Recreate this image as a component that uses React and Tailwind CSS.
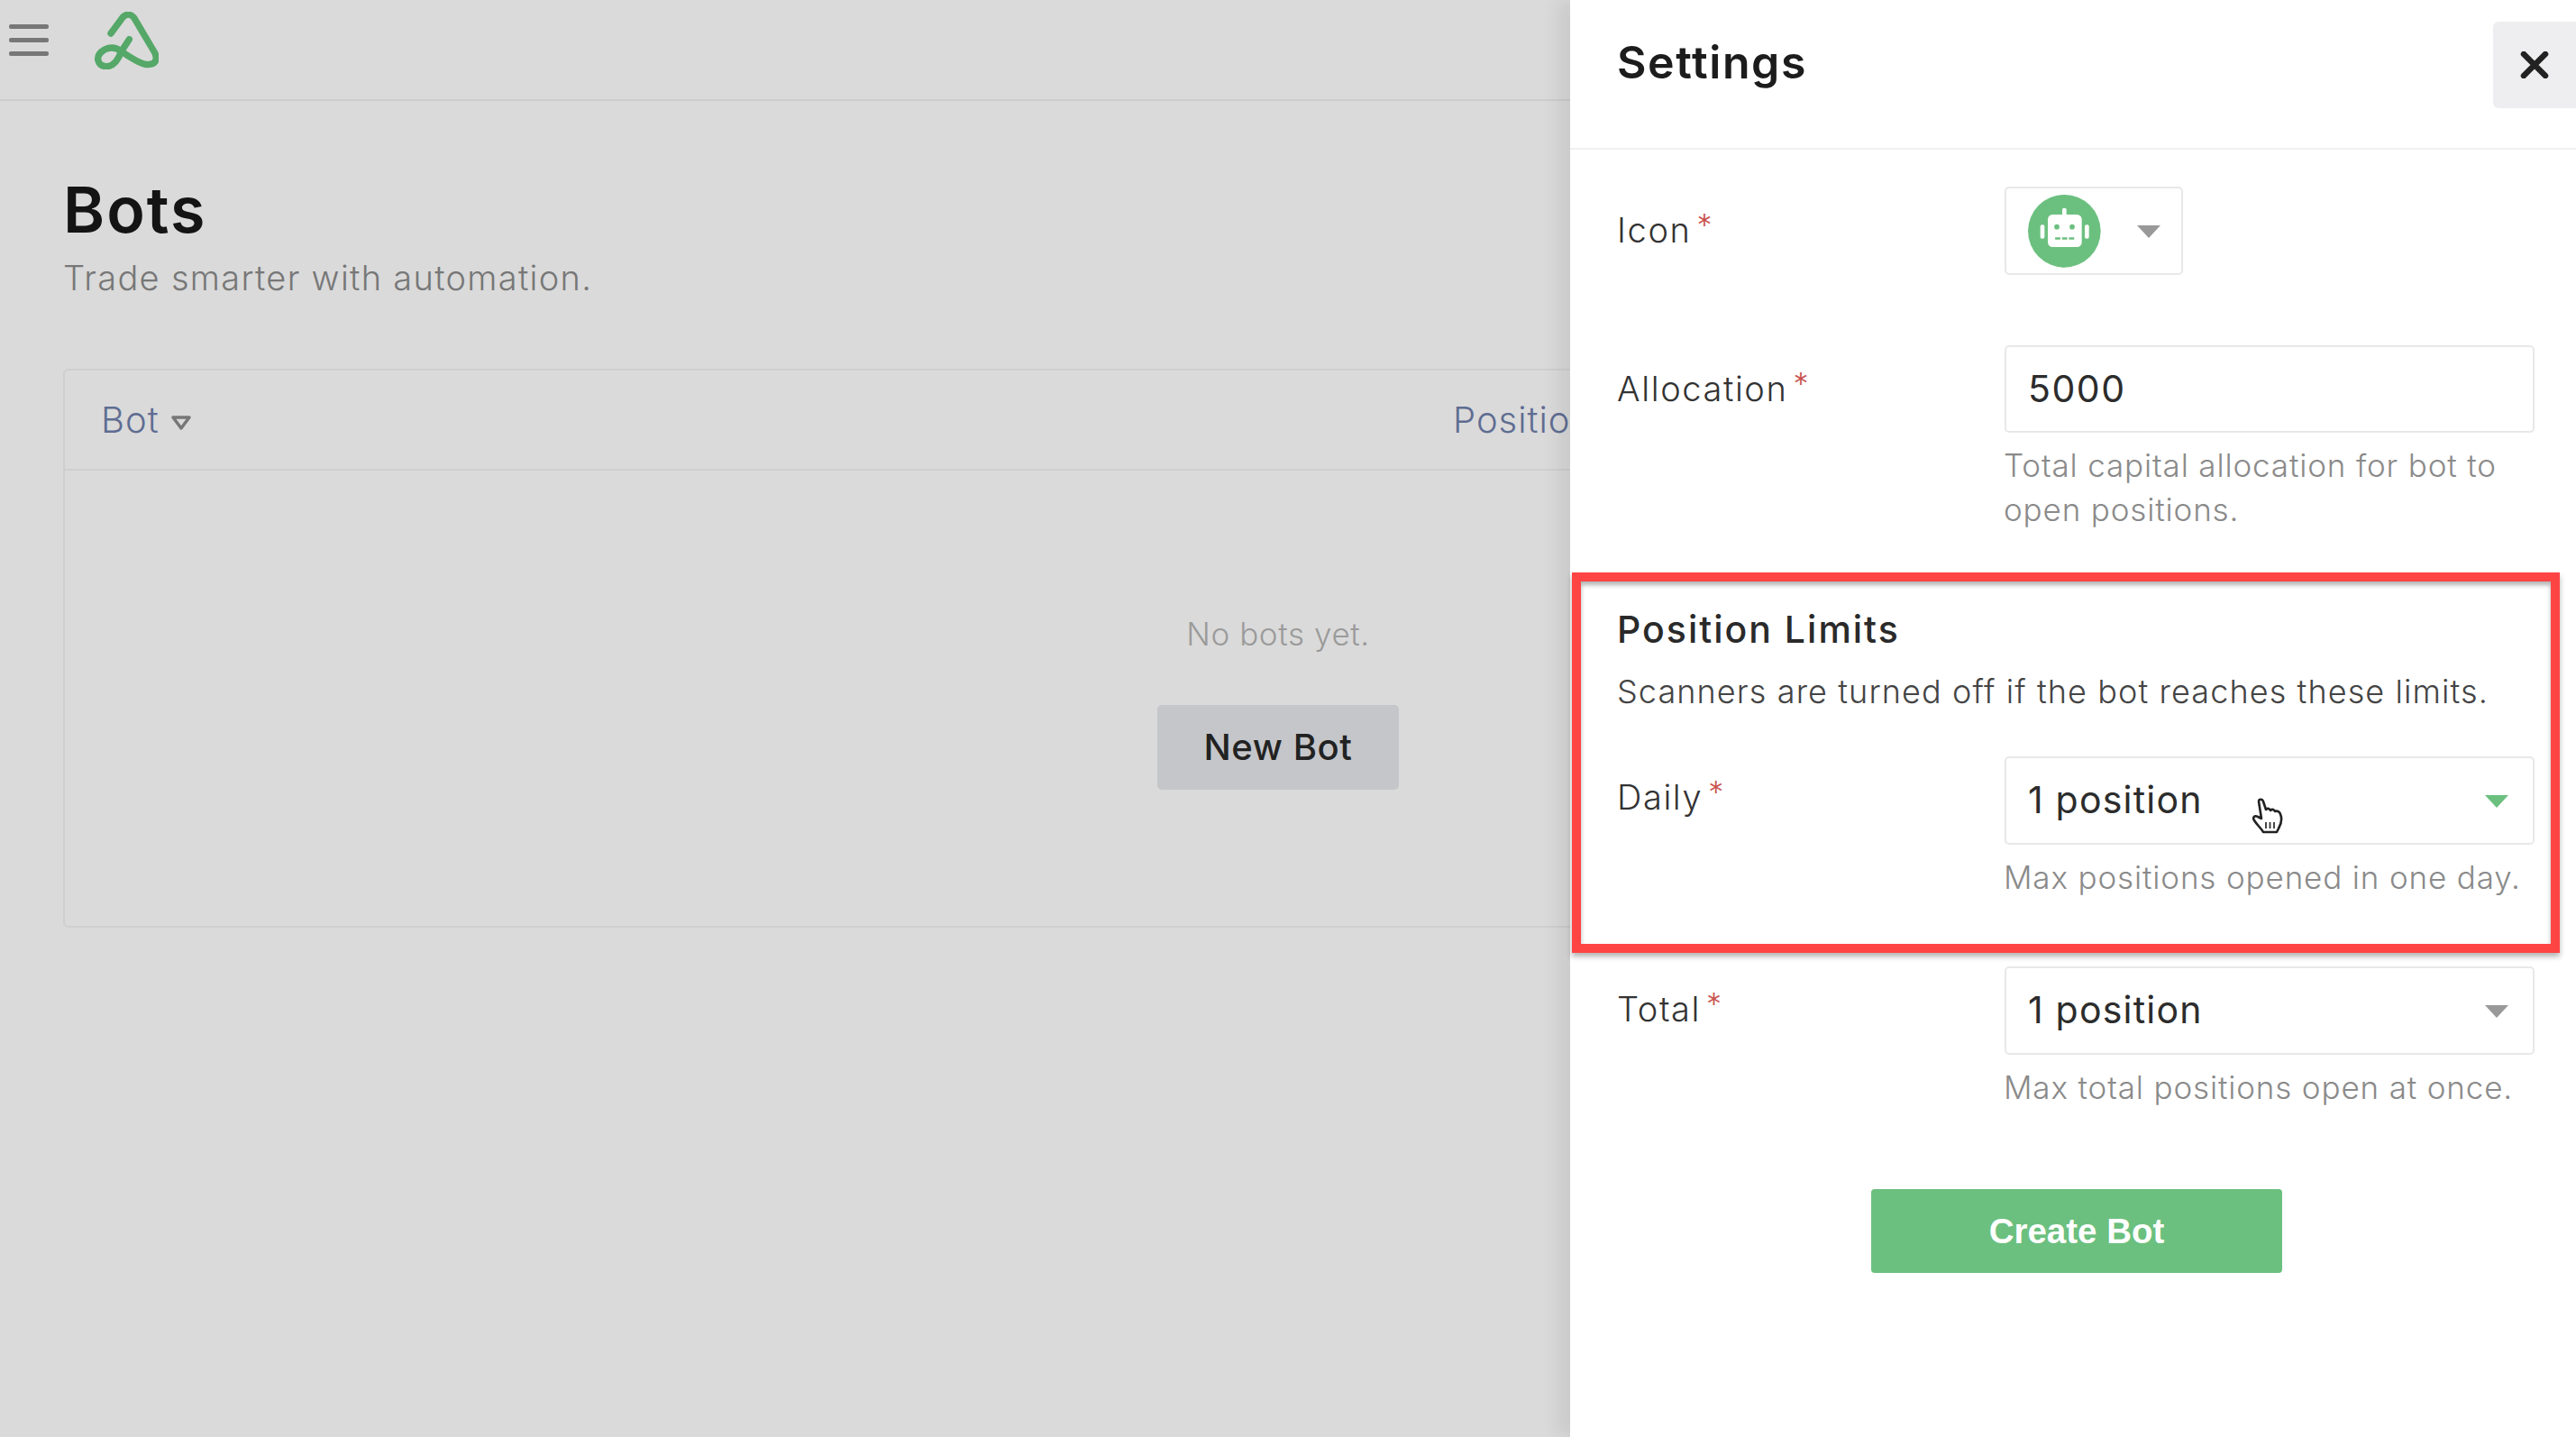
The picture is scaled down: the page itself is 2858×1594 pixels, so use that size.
import React from "react";

const Logo = () => (
  <svg width="72" height="64" viewBox="0 0 216 192" fill="none" className="shrink-0">
    <path
      d="M57 72 L97 18 Q116 0 134 20 L204 138 Q218 176 176 176 Q150 172 92 132 Q66 112 36 126 Q12 140 14 160 Q20 184 48 182 Q76 176 92 132 L118 92"
      stroke="#55a868"
      strokeWidth="22"
      strokeLinecap="round"
      strokeLinejoin="round"
    />
  </svg>
);

const Hamburger = () => (
  <svg width="44" height="36" viewBox="0 0 44 36" className="shrink-0">
    <rect x="0" y="0" width="44" height="5" rx="2" fill="#777" />
    <rect x="0" y="15" width="44" height="5" rx="2" fill="#777" />
    <rect x="0" y="30" width="44" height="5" rx="2" fill="#777" />
  </svg>
);

const Robot = () => (
  <svg width="81" height="81" viewBox="0 0 243 243" className="shrink-0">
    <circle cx="121" cy="121" r="121" fill="#6cc07f" />
    <rect x="114" y="44" width="14" height="30" rx="6" fill="#fff" />
    <rect x="66" y="66" width="113" height="108" rx="16" fill="#fff" />
    <rect x="41" y="100" width="14" height="46" rx="6" fill="#fff" />
    <rect x="189" y="100" width="14" height="46" rx="6" fill="#fff" />
    <circle cx="96" cy="107" r="8.5" fill="#6cc07f" />
    <circle cx="147" cy="107" r="8.5" fill="#6cc07f" />
    <rect x="90" y="142" width="18" height="7" rx="2" fill="#6cc07f" />
    <rect x="113" y="142" width="18" height="7" rx="2" fill="#6cc07f" />
    <rect x="136" y="142" width="18" height="7" rx="2" fill="#6cc07f" />
  </svg>
);

const Caret = ({ color }) => (
  <svg width="26" height="14" viewBox="0 0 26 14" className="mt-[2px] shrink-0">
    <path d="M0 0 H26 L13 14 Z" fill={color} />
  </svg>
);

const HandCursor = () => (
  <svg width="36" height="40" viewBox="0 0 36 40" className="absolute left-[272px] top-[44px]">
    <path
      d="M8 4 C8 1 12 1 13 4 L16 13 C18 11 20 12 21 14 C23 12 25 13 26 15 C28 14 31 15 32 18 C34 23 33 29 30 34 L28 38 L13 38 C11 34 6 30 3 25 C1 22 3 19 7 21 L11 23 Z"
      fill="#fff"
      stroke="#222"
      strokeWidth="2.6"
      strokeLinejoin="round"
    />
    <path d="M16 27 V34 M20.5 27 V34 M25 27 V34" stroke="#333" strokeWidth="1.8" />
  </svg>
);

const Label = ({ text }) => (
  <div className="w-[430px] shrink-0 text-[38px] font-light leading-[44px] tracking-[1.6px] text-[#333]">
    {text}
    <span className="relative top-[-7px] ml-[6px] text-[34px] font-light text-[#c9544f]">*</span>
  </div>
);

const Help = ({ children }) => (
  <div className="ml-[-1px] mt-[12px] w-[590px] text-[35px] font-light leading-[49px] tracking-[0.85px] text-[#8a8a8a]">
    {children}
  </div>
);

const Select = ({ caret, children }) => (
  <div className="relative flex h-[98px] w-[588px] items-center justify-between rounded-[5px] border-2 border-[#e8e8e8] pl-[24px] pr-[27px] text-[41px] font-normal tracking-[1.2px] text-[#2c2c2c]">
    1 position
    <Caret color={caret} />
    {children}
  </div>
);

const App = () => {
  return (
    <div className="relative h-[1594px] w-full overflow-hidden bg-[#dadada] font-['Inter',sans-serif]">
      {/* page behind the drawer */}
      <div className="flex h-[112px] items-center gap-[50px] border-b-2 border-[#cdcdcd] pb-[21px] pl-[10px]">
        <Hamburger />
        <Logo />
      </div>
      <div className="px-[70px] pt-[81px]">
        <h1 className="text-[70px] font-semibold leading-[80px] tracking-[2px] text-[#141414]">Bots</h1>
        <p className="mt-[12px] text-[38px] font-light leading-[46px] tracking-[1.3px] text-[#777]">
          Trade smarter with automation.
        </p>
        <div className="mt-[78px] h-[620px] w-[2696px] rounded-[6px] border-2 border-[#cfcfcf]">
          <div className="flex h-[111px] items-center border-b-2 border-[#cfcfcf] pl-[40px] text-[40px] font-light tracking-[1px] text-[#5f6d92]">
            <div className="flex w-[1500px] items-center gap-[12px]">
              Bot
              <svg width="24" height="18" viewBox="0 0 24 18" className="mt-[6px]">
                <path d="M3 3 H21 L12 15 Z" fill="none" stroke="#777" strokeWidth="3.5" strokeLinejoin="round" />
              </svg>
            </div>
            <div>Positions</div>
          </div>
          <div className="flex flex-col items-center pt-[159px]">
            <div className="text-[35px] font-light leading-[44px] tracking-[0.6px] text-[#9a9a9a]">No bots yet.</div>
            <button className="mt-[57px] h-[94px] w-[268px] rounded-[5px] bg-[#c5c6ca] text-[40px] font-medium tracking-[0.6px] text-[#222]">
              New Bot
            </button>
          </div>
        </div>
      </div>

      {/* settings drawer */}
      <div className="absolute bottom-0 right-0 top-0 w-[1116px] bg-white shadow-[-14px_0_18px_rgba(0,0,0,0.07)]">
        <div className="flex h-[166px] items-start justify-between border-b-2 border-[#f0f0f0] pl-[52px] pt-[24px]">
          <h2 className="mt-[20px] text-[50px] font-semibold leading-[50px] tracking-[1.6px] text-[#1c1c1c]">Settings</h2>
          <button className="flex h-[96px] w-[92px] items-center justify-center rounded-l-[6px] bg-[#eeeef0]">
            <svg width="32" height="30" viewBox="0 0 32 30">
              <path d="M4 3 L28 27 M28 3 L4 27" stroke="#222" strokeWidth="6.5" strokeLinecap="round" />
            </svg>
          </button>
        </div>

        <div className="pl-[52px] pr-[46px] pt-[41px]">
          <div className="flex">
            <div className="flex h-[98px] items-center">
              <Label text="Icon" />
            </div>
            <div className="flex h-[98px] w-[198px] items-center rounded-[5px] border-2 border-[#e8e8e8] pl-[24px]">
              <Robot />
              <div className="ml-[40px]">
                <Caret color="#999" />
              </div>
            </div>
          </div>

          <div className="mt-[78px] flex">
            <div className="flex h-[97px] items-center">
              <Label text="Allocation" />
            </div>
            <div>
              <div className="flex h-[97px] w-[588px] items-center rounded-[5px] border-2 border-[#e8e8e8] pl-[24px] text-[41px] tracking-[1.5px] text-[#2c2c2c]">
                5000
              </div>
              <Help>Total capital allocation for bot to open positions.</Help>
            </div>
          </div>

          <h3 className="mt-[83px] text-[41px] font-medium leading-[50px] tracking-[2px] text-[#2a2a2a]">Position Limits</h3>
          <p className="mt-[20px] whitespace-nowrap text-[36px] font-light leading-[48px] tracking-[1.1px] text-[#444]">
            Scanners are turned off if the bot reaches these limits.
          </p>

          <div className="mt-[48px] flex">
            <div className="flex h-[92px] items-center">
              <Label text="Daily" />
            </div>
            <div>
              <Select caret="#6cc07f">
                <HandCursor />
              </Select>
              <Help>Max positions opened in one day.</Help>
            </div>
          </div>

          <div className="mt-[74px] flex">
            <div className="flex h-[96px] items-center">
              <Label text="Total" />
            </div>
            <div>
              <Select caret="#999" />
              <Help>Max total positions open at once.</Help>
            </div>
          </div>

          <div className="mt-[88px] pl-[282px]">
            <button className="h-[93px] w-[456px] rounded-[4px] bg-[#6cc07f] font-['Liberation_Sans',sans-serif] text-[38.5px] font-bold text-white">
              Create Bot
            </button>
          </div>
        </div>

        {/* red highlight drawn over the recording */}
        <div className="absolute left-[2px] top-[635px] h-[422px] w-[1096px] border-[10px] border-[#ff4444] shadow-[0_4px_6px_rgba(0,0,0,0.3),inset_0_4px_5px_rgba(0,0,0,0.3)]" />
      </div>
    </div>
  );
};

export default App;
